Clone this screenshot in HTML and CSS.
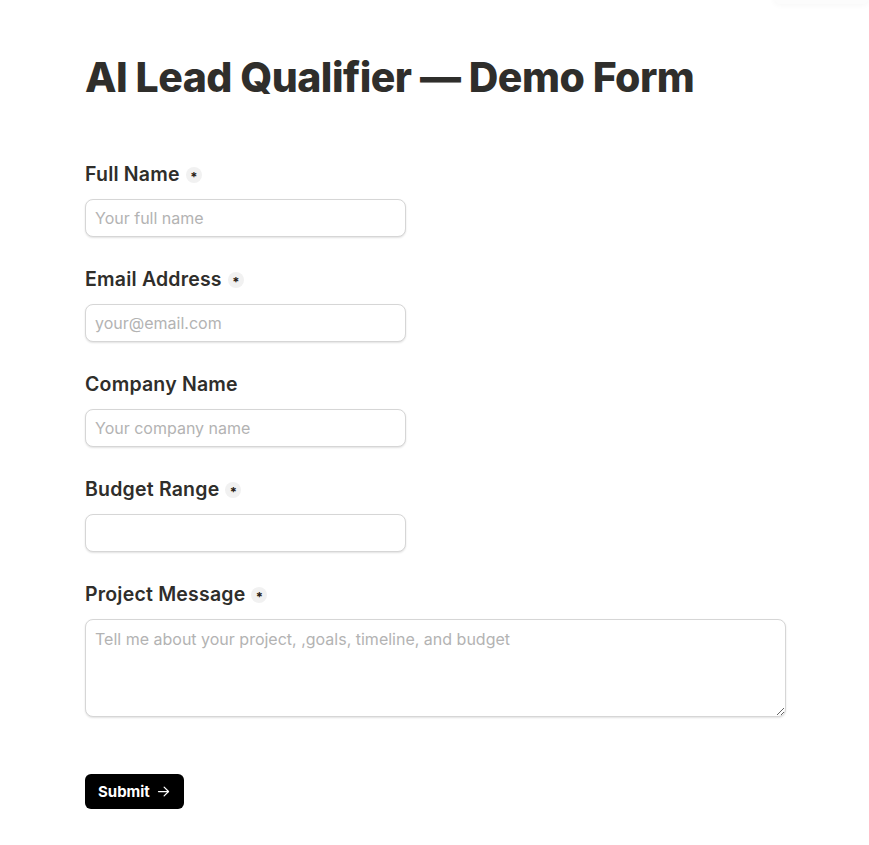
FILE: index.html
```html
<!DOCTYPE html>
<html lang="en">
<head>
    <meta charset="UTF-8">
    <meta name="viewport" content="width=device-width, initial-scale=1.0">
    <title>AI Lead Qualifier — Demo Form</title>
    <link rel="stylesheet" href="styles.css">
</head>
<body>
    <div class="corner-shadow"></div>
    <div class="container">
        <h1>AI Lead Qualifier — Demo Form</h1>

        <form id="leadForm" class="lead-form">
            <div class="field">
                <label for="fullName">Full Name <span class="req">*</span></label>
                <input type="text" id="fullName" class="input" placeholder="Your full name">
            </div>

            <div class="field">
                <label for="email">Email Address <span class="req">*</span></label>
                <input type="email" id="email" class="input" placeholder="your@email.com">
            </div>

            <div class="field">
                <label for="company">Company Name</label>
                <input type="text" id="company" class="input" placeholder="Your company name">
            </div>

            <div class="field">
                <label for="budget">Budget Range <span class="req">*</span></label>
                <input type="text" id="budget" class="input">
            </div>

            <div class="field">
                <label for="message">Project Message <span class="req">*</span></label>
                <textarea id="message" class="textarea" placeholder="Tell me about your project, ,goals, timeline, and budget"></textarea>
            </div>

            <button type="submit" class="submit-btn">
                Submit
                <svg width="15" height="15" viewBox="0 0 24 24" fill="none" stroke="currentColor" stroke-width="2" stroke-linecap="round" stroke-linejoin="round">
                    <path d="M4 12h16"/>
                    <path d="M13 5l7 7-7 7"/>
                </svg>
            </button>
        </form>
    </div>
</body>
</html>
```

FILE: styles.css
```css
/* General Styling */
body {
    font-family: Inter, "Noto Sans", Arial, sans-serif;
    background: #ffffff;
    color: #2f2e2b;
    margin: 0;
    padding: 0;
}

.corner-shadow {
    position: absolute;
    top: -10px;
    right: 0;
    width: 95px;
    height: 14px;
    border-radius: 6px;
    box-shadow: 0 1px 6px rgba(0, 0, 0, 0.04);
    background: #fcfcfc;
}

.container {
    padding: 53px 85px 40px;
}

h1 {
    font-size: 41px;
    font-weight: 800;
    line-height: 1.2;
    letter-spacing: -0.55px;
    margin: 0 0 60px;
    color: #2f2e2b;
}

/* Form */
.lead-form {
    display: flex;
    flex-direction: column;
    gap: 30px;
}

.field {
    display: flex;
    flex-direction: column;
    gap: 13px;
}

.field label {
    font-size: 19.5px;
    font-weight: 600;
    letter-spacing: 0.2px;
    line-height: 24px;
    display: flex;
    align-items: center;
    gap: 6px;
}

.req {
    width: 16px;
    height: 16px;
    border-radius: 50%;
    background: #f1f1f1;
    color: #2a1d15;
    font-size: 13px;
    font-weight: 700;
    letter-spacing: 0;
    line-height: 21px;
    text-align: center;
    margin-top: 2px;
}

.input,
.textarea {
    font-family: inherit;
    font-size: 16px;
    color: #2f2e2b;
    border: 1px solid #d6d6d6;
    border-radius: 8px;
    box-shadow: 0 1px 2px rgba(0, 0, 0, 0.12);
    padding: 0 9px;
    box-sizing: border-box;
    background: #fff;
    outline: none;
}

.input {
    width: 321px;
    height: 38px;
}

.textarea {
    width: 701px;
    height: 98px;
    padding-top: 9px;
    resize: both;
}

.input::placeholder,
.textarea::placeholder {
    color: #b3b3b3;
}

/* Submit Button */
.submit-btn {
    align-self: flex-start;
    margin-top: 27px;
    display: flex;
    align-items: center;
    gap: 6px;
    height: 35px;
    padding: 0 13px;
    background: #000;
    color: #fff;
    border: none;
    border-radius: 6px;
    font-family: inherit;
    font-size: 15px;
    font-weight: 700;
    cursor: pointer;
}
```
